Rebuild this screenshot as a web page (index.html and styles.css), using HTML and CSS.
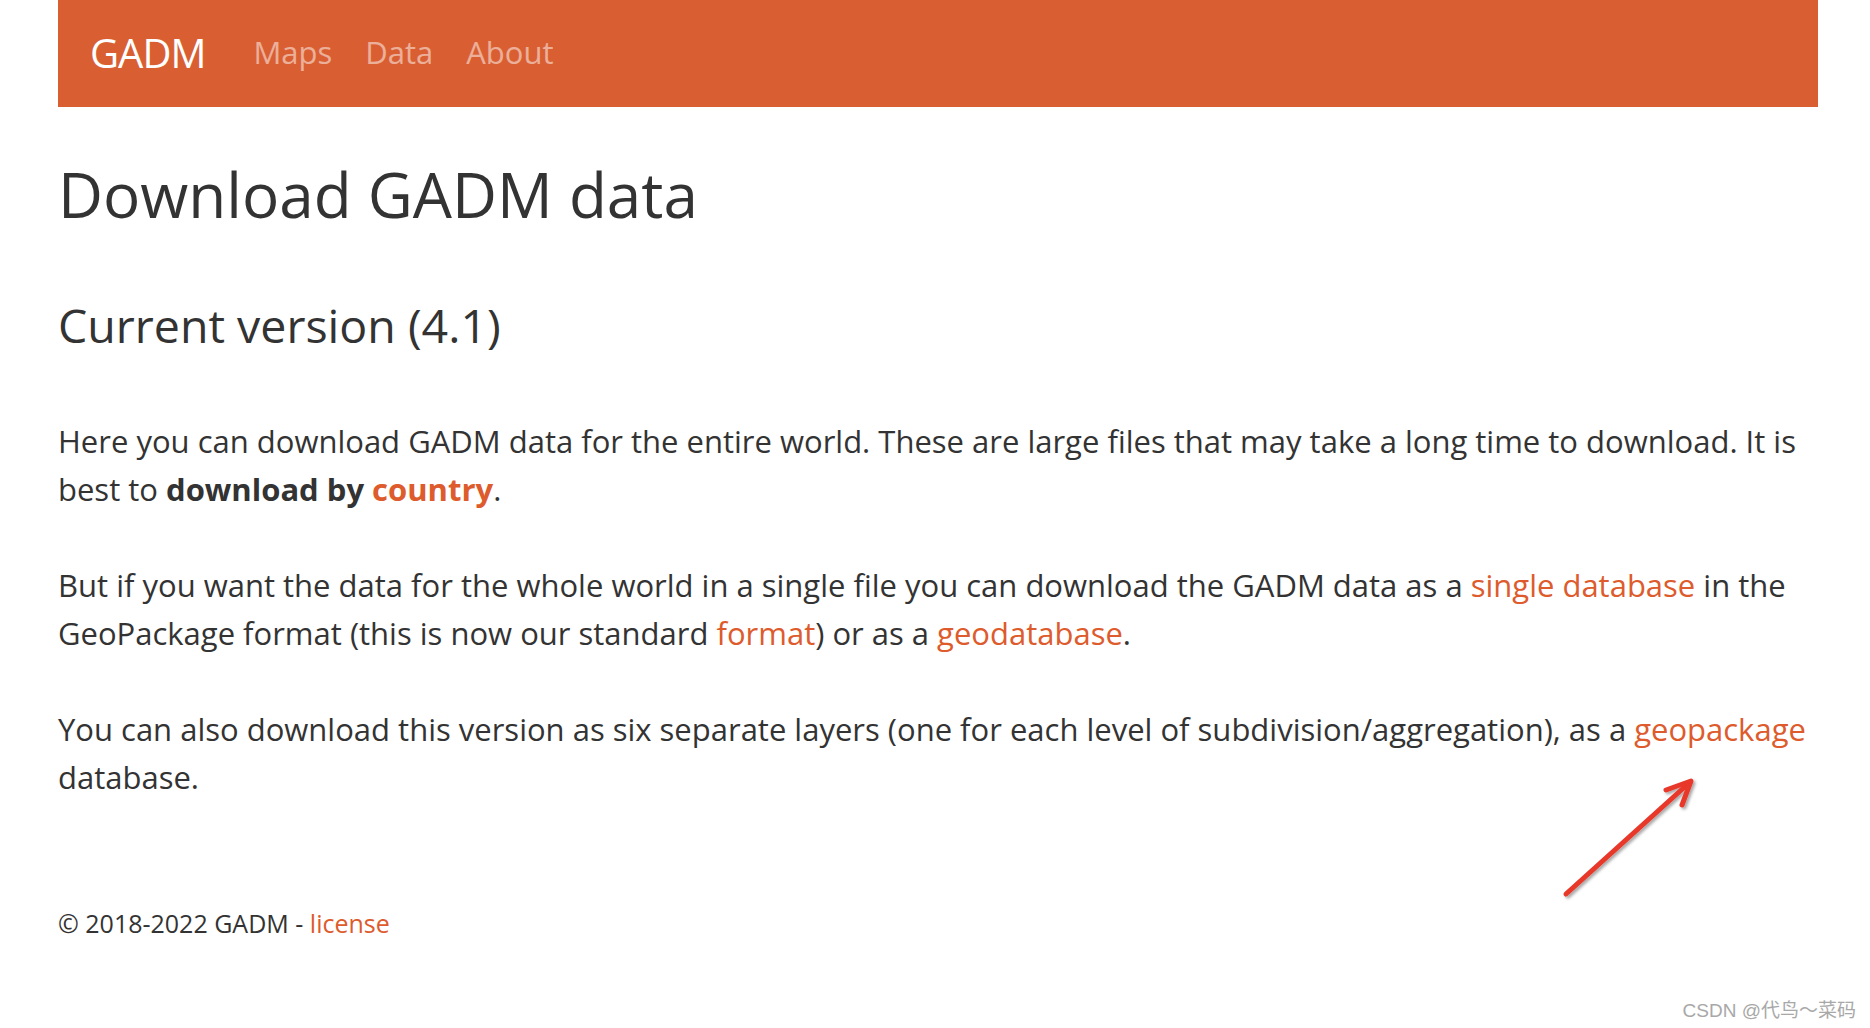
FILE: index.html
```html
<!DOCTYPE html>
<html lang="en">
<head>
<meta charset="utf-8">
<title>GADM</title>
<link rel="stylesheet" href="styles.css">
</head>
<body>
<div class="container">
  <nav class="navbar">
    <a class="brand" href="#">GADM</a>
    <a class="nav-link" href="#">Maps</a>
    <a class="nav-link" href="#">Data</a>
    <a class="nav-link" href="#">About</a>
  </nav>
  <main class="content">
    <h1>Download GADM data</h1>
    <h2>Current version (4.1)</h2>
    <p>Here you can download GADM data for the entire world. These are large files that may take a long time to download. It is best to <b>download by <a href="#">country</a></b>.</p>
    <p>But if you want the data for the whole world in a single file you can download the GADM data as a <a href="#">single database</a> in the GeoPackage format (this is now our standard <a href="#">format</a>) or as a <a href="#">geodatabase</a>.</p>
    <p>You can also download this version as six separate layers (one for each level of subdivision/aggregation), as a <a href="#">geopackage</a> database.</p>
  </main>
  <footer class="footer">© 2018-2022 GADM - <a href="#">license</a></footer>
</div>
<svg class="arrow" width="160" height="140" viewBox="0 0 160 140">
  <defs>
    <filter id="sh" x="-20%" y="-20%" width="140%" height="140%">
      <feDropShadow dx="2" dy="2" stdDeviation="1.5" flood-color="#000" flood-opacity="0.35"/>
    </filter>
  </defs>
  <g filter="url(#sh)" stroke="#e8372a" stroke-width="5" stroke-linecap="round" stroke-linejoin="round" fill="none">
    <path d="M10 128 L133 17"/>
    <path d="M110 24 L135 15 L126 39"/>
  </g>
</svg>
<div class="watermark">CSDN @代鸟～菜码</div>
</body>
</html>
```

FILE: styles.css
```css
html, body {
  margin: 0;
  padding: 0;
  background: #fff;
}
body {
  font-family: "Open Sans", "Noto Sans", sans-serif;
  color: #333;
  position: relative;
  min-height: 1028px;
}
.container {
  margin-left: 58px;
  width: 1760px;
}
.navbar {
  height: 107px;
  background: #d95f33;
  display: flex;
  align-items: center;
  padding-left: 32px;
  box-sizing: border-box;
}
.navbar a {
  text-decoration: none;
}
.brand {
  color: #fff;
  font-size: 40px;
  margin-right: 48px;
  letter-spacing: -1px;
  margin-top: -3px;
}
.nav-link {
  color: rgba(255, 255, 255, 0.5);
  font-size: 31px;
  margin-right: 33px;
  margin-top: -3px;
}
h1 {
  font-weight: 400;
  font-size: 62px;
  line-height: 76px;
  margin: 49px 0 0;
}
h2 {
  font-weight: 400;
  font-size: 46.5px;
  line-height: 58px;
  margin: 64px 0 0;
}
p {
  font-size: 31px;
  line-height: 48px;
  margin: 48px 0 0;
}
h2 + p {
  margin-top: 63px;
}
a {
  color: #dd5b2c;
  text-decoration: none;
}
b {
  font-weight: 700;
}
.footer {
  font-size: 25px;
  line-height: 36px;
  margin-top: 104px;
}
.arrow {
  position: absolute;
  left: 1556px;
  top: 766px;
}
.watermark {
  position: absolute;
  right: 14px;
  bottom: 6px;
  font-family: "Liberation Sans", "Noto Sans CJK SC", sans-serif;
  font-size: 19px;
  color: #a8a8a8;
}
```
